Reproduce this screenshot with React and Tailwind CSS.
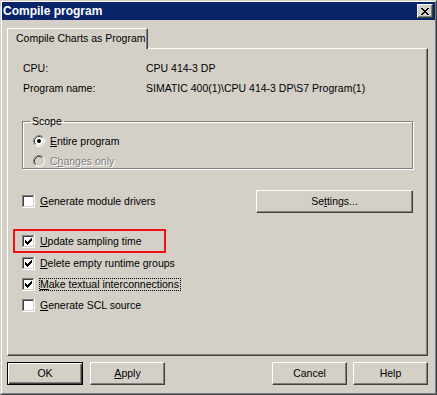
import React from "react";

const CHECK_PIXELS = [
  [9, 3, 1], [8, 4, 2], [3, 5, 1], [7, 5, 3], [3, 6, 2], [6, 6, 3],
  [3, 7, 5], [4, 8, 3], [5, 9, 1],
];

const CheckBox = ({ checked }) => (
  <svg width="13" height="13" viewBox="0 0 13 13" shapeRendering="crispEdges" className="shrink-0">
    <rect x="0" y="0" width="13" height="13" fill="#ffffff" />
    <rect x="0" y="0" width="12" height="1" fill="#808080" />
    <rect x="0" y="0" width="1" height="12" fill="#808080" />
    <rect x="1" y="1" width="10" height="1" fill="#404040" />
    <rect x="1" y="1" width="1" height="10" fill="#404040" />
    <rect x="1" y="11" width="11" height="1" fill="#d4d0c8" />
    <rect x="11" y="1" width="1" height="11" fill="#d4d0c8" />
    {checked &&
      CHECK_PIXELS.map(([x, y, w]) => (
        <rect key={`${x}-${y}`} x={x} y={y} width={w} height="1" fill="#000000" />
      ))}
  </svg>
);

const Radio = ({ checked, disabled }) => (
  <svg width="12" height="12" viewBox="0 0 12 12" className="shrink-0">
    <circle cx="6" cy="6" r="5" fill={disabled ? "#d4d0c8" : "#ffffff"} />
    <path d="M2.11 9.89 A5.5 5.5 0 0 1 9.89 2.11" stroke="#808080" fill="none" />
    <path d="M9.89 2.11 A5.5 5.5 0 0 1 2.11 9.89" stroke="#ffffff" fill="none" />
    <path d="M2.82 9.18 A4.5 4.5 0 0 1 9.18 2.82" stroke="#404040" fill="none" />
    <path d="M9.18 2.82 A4.5 4.5 0 0 1 2.82 9.18" stroke="#d4d0c8" fill="none" />
    {checked && <circle cx="6" cy="6" r="2" fill="#000000" />}
  </svg>
);

// classic raised 3d button
const Button = ({ children, isDefault, className = "" }) => (
  <button
    type="button"
    className={`h-[23px] flex items-center justify-center text-black bg-[#d4d0c8] ${
      isDefault
        ? "border border-black shadow-[inset_1px_1px_0_#ffffff,inset_-1px_-1px_0_#404040,inset_-2px_-2px_0_#808080]"
        : "border border-t-white border-l-white border-r-[#404040] border-b-[#404040] shadow-[inset_-1px_-1px_0_#808080]"
    } ${className}`}
  >
    {children}
  </button>
);

const CheckRow = ({ checked, children }) => (
  <div className="h-[21px] flex items-center gap-[5px]">
    <CheckBox checked={checked} />
    <span>{children}</span>
  </div>
);

export default function App() {
  return (
    <div className="w-[437px] h-[395px] bg-[#d4d0c8] border border-t-[#d4d0c8] border-l-[#d4d0c8] border-r-[#404040] border-b-[#404040] font-['Liberation_Sans',Arial,sans-serif] text-[10.5px] leading-[13px] text-black select-none">
      <div className="h-full border border-t-white border-l-white border-r-[#808080] border-b-[#808080] flex flex-col">
        {/* title bar */}
        <div className="h-[18px] bg-[#0a246a] flex items-center justify-between pl-[1px] pr-[2px]">
          <span className="text-white font-bold text-[12px] leading-[14px]">Compile program</span>
          <div className="w-[16px] h-[14px] bg-[#d4d0c8] border border-t-white border-l-white border-r-[#404040] border-b-[#404040] shadow-[inset_-1px_-1px_0_#808080] flex items-center justify-center">
            <svg width="8" height="7" viewBox="0 0 8 7" shapeRendering="crispEdges">
              <path d="M0 0h2v1h-2z M6 0h2v1h-2z M1 1h2v1h-2z M5 1h2v1h-2z M2 2h4v1h-4z M3 3h2v1h-2z M2 4h4v1h-4z M1 5h2v1h-2z M5 5h2v1h-2z M0 6h2v1h-2z M6 6h2v1h-2z" fill="#000" />
            </svg>
          </div>
        </div>

        {/* tabs */}
        <div className="mt-[8px] ml-[5px] w-[421px]">
          <div className="flex">
            <div className="relative z-10 w-[141px] h-[21px] -mb-px bg-[#d4d0c8] border border-b-0 border-t-white border-l-white border-r-[#404040] shadow-[inset_-1px_0_0_#808080] pl-[8px] pt-[3px]">
              Compile Charts as Program
            </div>
          </div>
          <div className="h-[308px] border border-t-white border-l-white border-r-[#404040] border-b-[#404040] shadow-[inset_-1px_-1px_0_#808080] pt-[9px] pl-[14px]">
            <div className="h-[20px] flex items-center pl-[1px]">
              <span className="w-[123px]">CPU:</span>
              <span>CPU 414-3 DP</span>
            </div>
            <div className="h-[20px] flex items-center pl-[1px]">
              <span className="w-[123px]">Program name:</span>
              <span>SIMATIC 400(1)\CPU 414-3 DP\S7 Program(1)</span>
            </div>

            <fieldset className="mt-[17px] w-[391px] border border-[#808080] shadow-[inset_1px_1px_0_#ffffff,1px_1px_0_#ffffff] pl-[10px] pt-[6px] pb-0">
              <legend className="-ml-[3px] px-[2px] leading-[13px]">Scope</legend>
              <div className="flex flex-col gap-[6px]">
                <div className="h-[14px] flex items-center gap-[5px]">
                  <Radio checked />
                  <span>
                    <span className="underline">E</span>ntire program
                  </span>
                </div>
                <div className="h-[14px] flex items-center gap-[5px]">
                  <Radio disabled />
                  <span className="text-[#808080] [text-shadow:1px_1px_0_#ffffff]">
                    C<span className="underline">h</span>anges only
                  </span>
                </div>
              </div>
            </fieldset>

            <div className="mt-[21px] w-[391px] h-[23px] flex items-center justify-between">
              <div className="flex items-center gap-[5px]">
                <CheckBox />
                <span>
                  <span className="underline">G</span>enerate module drivers
                </span>
              </div>
              <Button className="w-[157px]">
                Se<span className="underline">t</span>tings...
              </Button>
            </div>

            <div className="mt-[16px] -ml-[9px] w-[153px] h-[24px] border-2 border-[#ee1111] pl-[7px] flex items-center gap-[5px]">
              <CheckBox checked />
              <span>
                <span className="underline">U</span>pdate sampling time
              </span>
            </div>
            <CheckRow checked>
              <span className="underline">D</span>elete empty runtime groups
            </CheckRow>
            <div className="h-[21px] flex items-center gap-[4px]">
              <CheckBox checked />
              <span className="border border-dotted border-black leading-[11px] pr-[1px]">
                <span className="underline">M</span>ake textual interconnections
              </span>
            </div>
            <CheckRow>
              <span className="underline">G</span>enerate SCL source
            </CheckRow>
          </div>
        </div>

        {/* dialog buttons */}
        <div className="mt-[6px] ml-[5px] w-[421px] flex justify-between">
          <div className="flex gap-[7px]">
            <Button isDefault className="w-[76px]">OK</Button>
            <Button className="w-[75px]">
              <span className="underline">A</span>pply
            </Button>
          </div>
          <div className="flex gap-[6px]">
            <Button className="w-[75px]">Cancel</Button>
            <Button className="w-[75px]">Help</Button>
          </div>
        </div>
      </div>
    </div>
  );
}
